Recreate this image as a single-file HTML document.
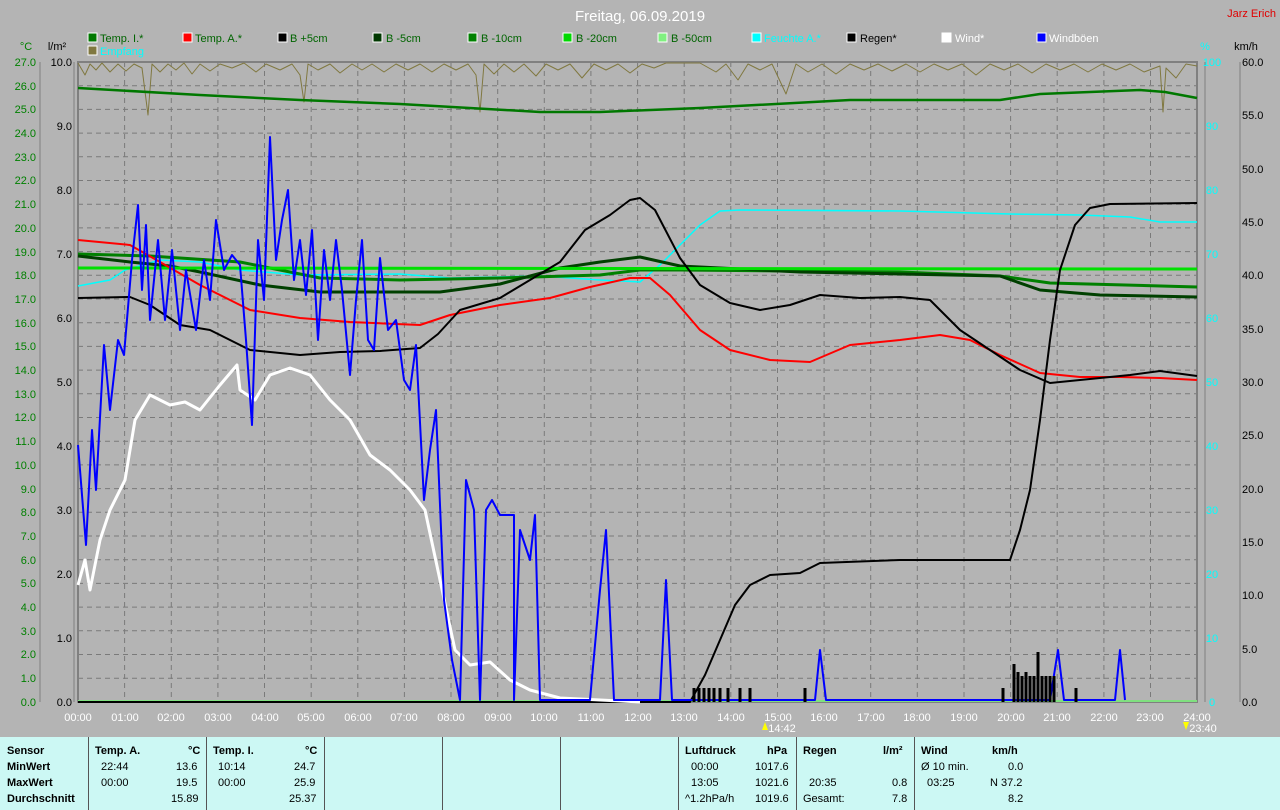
<!DOCTYPE html>
<html><head><meta charset="utf-8"><style>
body{margin:0;width:1280px;height:810px;overflow:hidden;background:#b4b4b4;font-family:"Liberation Sans",sans-serif}
svg{position:absolute;left:0;top:0}
#tbl{position:absolute;left:0;top:737px;width:1280px;height:73px;background:#ccf8f4;font-size:11px;color:#000}
.c{position:absolute;top:0;height:73px;border-left:1px solid #555}
.t{position:absolute;white-space:pre}
b{font-weight:bold}
</style></head><body>
<svg width="1280" height="737" font-family="Liberation Sans" font-size="11">
<text x="640" y="21" fill="#fff" font-size="15" text-anchor="middle">Freitag, 06.09.2019</text>
<text x="1276" y="17" fill="#e00000" font-size="11" text-anchor="end">Jarz Erich</text>
<g font-size="11">
<rect x="88" y="33" width="9" height="9" fill="#007800" stroke="#fff"/><text x="100" y="42" fill="#006400">Temp. I.*</text>
<rect x="183" y="33" width="9" height="9" fill="#f00" stroke="#fff"/><text x="195" y="42" fill="#006400">Temp. A.*</text>
<rect x="278" y="33" width="9" height="9" fill="#000" stroke="#fff"/><text x="290" y="42" fill="#006400">B +5cm</text>
<rect x="373" y="33" width="9" height="9" fill="#003800" stroke="#fff"/><text x="386" y="42" fill="#006400">B -5cm</text>
<rect x="468" y="33" width="9" height="9" fill="#008000" stroke="#fff"/><text x="481" y="42" fill="#006400">B -10cm</text>
<rect x="563" y="33" width="9" height="9" fill="#00d800" stroke="#fff"/><text x="576" y="42" fill="#006400">B -20cm</text>
<rect x="658" y="33" width="9" height="9" fill="#80f080" stroke="#fff"/><text x="671" y="42" fill="#006400">B -50cm</text>
<rect x="752" y="33" width="9" height="9" fill="#0ff" stroke="#fff"/><text x="764" y="42" fill="#0ff">Feuchte A.*</text>
<rect x="847" y="33" width="9" height="9" fill="#000" stroke="#fff"/><text x="860" y="42" fill="#000">Regen*</text>
<rect x="942" y="33" width="9" height="9" fill="#fff" stroke="#fff"/><text x="955" y="42" fill="#fff">Wind*</text>
<rect x="1037" y="33" width="9" height="9" fill="#00f" stroke="#fff"/><text x="1049" y="42" fill="#fff">Windböen</text>
<rect x="88" y="46" width="9" height="9" fill="#807840" stroke="#fff"/><text x="100" y="55" fill="#0ff">Empfang</text>
</g>
<text x="26" y="50" fill="#008000" text-anchor="middle">°C</text>
<text x="57" y="50" fill="#000" text-anchor="middle">l/m²</text>
<text x="1205" y="50" fill="#0ff" text-anchor="middle">%</text>
<text x="1246" y="50" fill="#000" text-anchor="middle">km/h</text>
<g id="grid" stroke="#7a7a7a" stroke-dasharray="5,4" stroke-width="1">
<path d="M78 85.7H1197M78 109.4H1197M78 133.1H1197M78 156.8H1197M78 180.5H1197M78 204.2H1197M78 227.9H1197M78 251.6H1197M78 275.3H1197M78 299H1197M78 322.7H1197M78 346.4H1197M78 370.1H1197M78 393.8H1197M78 417.5H1197M78 441.2H1197M78 464.9H1197M78 488.6H1197M78 512.3H1197M78 536H1197M78 559.7H1197M78 583.4H1197M78 607.1H1197M78 630.8H1197M78 654.5H1197M78 678.2H1197"/>
<path d="M124.6 62V702M171.3 62V702M217.9 62V702M264.5 62V702M311.2 62V702M357.8 62V702M404.4 62V702M451 62V702M497.7 62V702M544.3 62V702M590.9 62V702M637.6 62V702M684.2 62V702M730.8 62V702M777.5 62V702M824.1 62V702M870.7 62V702M917.3 62V702M964 62V702M1010.6 62V702M1057.2 62V702M1103.9 62V702M1150.5 62V702"/>
</g>
<rect x="78" y="62" width="1119" height="640" fill="none" stroke="#808080" stroke-width="2"/>
<g stroke="#808080"><path d="M40 62V702M74 62V702M1205 62V702M1240 62V702"/></g>
<g fill="#008000" font-size="11" text-anchor="end">
<text x="36" y="66">27.0</text><text x="36" y="90">26.0</text><text x="36" y="113">25.0</text><text x="36" y="137">24.0</text><text x="36" y="161">23.0</text><text x="36" y="184">22.0</text><text x="36" y="208">21.0</text><text x="36" y="232">20.0</text><text x="36" y="256">19.0</text><text x="36" y="279">18.0</text><text x="36" y="303">17.0</text><text x="36" y="327">16.0</text><text x="36" y="350">15.0</text><text x="36" y="374">14.0</text><text x="36" y="398">13.0</text><text x="36" y="421">12.0</text><text x="36" y="445">11.0</text><text x="36" y="469">10.0</text><text x="36" y="493">9.0</text><text x="36" y="516">8.0</text><text x="36" y="540">7.0</text><text x="36" y="564">6.0</text><text x="36" y="587">5.0</text><text x="36" y="611">4.0</text><text x="36" y="635">3.0</text><text x="36" y="658">2.0</text><text x="36" y="682">1.0</text><text x="36" y="706">0.0</text>
</g>
<g fill="#000" text-anchor="end">
<text x="72" y="66">10.0</text><text x="72" y="130">9.0</text><text x="72" y="194">8.0</text><text x="72" y="258">7.0</text><text x="72" y="322">6.0</text><text x="72" y="386">5.0</text><text x="72" y="450">4.0</text><text x="72" y="514">3.0</text><text x="72" y="578">2.0</text><text x="72" y="642">1.0</text><text x="72" y="706">0.0</text>
</g>
<g fill="#0ff" text-anchor="middle">
<text x="1212" y="66">100</text><text x="1212" y="130">90</text><text x="1212" y="194">80</text><text x="1212" y="258">70</text><text x="1212" y="322">60</text><text x="1212" y="386">50</text><text x="1212" y="450">40</text><text x="1212" y="514">30</text><text x="1212" y="578">20</text><text x="1212" y="642">10</text><text x="1212" y="706">0</text>
</g>
<g fill="#000">
<text x="1242" y="66">60.0</text><text x="1242" y="119">55.0</text><text x="1242" y="173">50.0</text><text x="1242" y="226">45.0</text><text x="1242" y="279">40.0</text><text x="1242" y="333">35.0</text><text x="1242" y="386">30.0</text><text x="1242" y="439">25.0</text><text x="1242" y="493">20.0</text><text x="1242" y="546">15.0</text><text x="1242" y="599">10.0</text><text x="1242" y="653">5.0</text><text x="1242" y="706">0.0</text>
</g>
<g fill="#fff" text-anchor="middle">
<text x="78" y="721">00:00</text><text x="125" y="721">01:00</text><text x="171" y="721">02:00</text><text x="218" y="721">03:00</text><text x="265" y="721">04:00</text><text x="311" y="721">05:00</text><text x="358" y="721">06:00</text><text x="404" y="721">07:00</text><text x="451" y="721">08:00</text><text x="498" y="721">09:00</text><text x="544" y="721">10:00</text><text x="591" y="721">11:00</text><text x="638" y="721">12:00</text><text x="684" y="721">13:00</text><text x="731" y="721">14:00</text><text x="778" y="721">15:00</text><text x="824" y="721">16:00</text><text x="871" y="721">17:00</text><text x="917" y="721">18:00</text><text x="964" y="721">19:00</text><text x="1011" y="721">20:00</text><text x="1057" y="721">21:00</text><text x="1104" y="721">22:00</text><text x="1150" y="721">23:00</text><text x="1197" y="721">24:00</text>
<text x="782" y="732">14:42</text><text x="1203" y="732">23:40</text>
</g>
<path d="M762 730l3 -8l3 8z" fill="#ff0"/><path d="M1183 722l3 8l3 -8z" fill="#ff0"/>
<path d="M78 701H1197" stroke="#80e080" stroke-width="2"/>
<g fill="none" stroke-linejoin="round">
<polyline stroke="#807840" stroke-width="1" points="78,63 85,75 90,64 96,70 102,63 110,72 118,64 126,71 134,64 142,68 148,115 152,64 160,72 168,64 176,70 184,63 192,74 200,64 210,71 220,64 232,68 244,63 256,72 266,64 280,70 292,64 300,75 304,102 308,64 318,70 330,64 340,73 352,64 362,70 372,64 384,72 396,64 408,70 420,64 432,72 444,64 456,70 468,64 476,75 480,112 484,64 494,74 504,64 514,72 524,64 536,76 546,64 558,70 570,64 582,78 594,64 606,70 618,64 630,73 642,64 654,68 666,63 700,63 716,72 726,64 738,80 748,64 760,70 772,64 786,94 796,64 808,72 822,64 836,74 850,64 864,70 878,64 892,71 906,64 920,72 934,64 948,70 962,64 976,75 990,64 1004,70 1018,64 1032,73 1046,64 1060,70 1074,64 1088,72 1102,64 1116,70 1130,64 1144,72 1160,66 1163,112 1166,68 1176,78 1186,64 1197,66"/>
<polyline stroke="#007800" stroke-width="2.5" points="78,88 200,95 300,100 400,104 540,112 600,112 700,108 850,100 1000,100 1040,94 1140,90 1165,92 1197,98"/>
<polyline stroke="#00ffff" stroke-width="1.5" points="78,286 110,280 125,270 160,260 200,262 240,270 300,275 400,274 450,278 540,276 600,280 640,282 660,265 680,245 700,225 720,211 740,210 900,211 1010,214 1080,215 1130,217 1160,222 1197,222"/>
<polyline stroke="#008000" stroke-width="3" points="78,254 150,256 240,262 320,278 400,280 500,278 600,275 640,270 680,270 900,272 1000,276 1050,283 1197,287"/>
<polyline stroke="#004000" stroke-width="3" points="78,256 130,262 170,266 200,272 260,285 320,292 440,292 500,284 560,268 600,262 640,257 680,266 800,272 1000,276 1040,290 1100,295 1197,297"/>
<polyline stroke="#00e000" stroke-width="3" points="78,268 1197,269"/>
<polyline stroke="#f00" stroke-width="2" points="78,240 130,245 160,262 200,285 250,310 300,318 350,322 420,325 450,315 500,305 550,298 590,287 630,278 650,278 670,295 700,330 730,350 770,360 810,362 850,345 900,340 940,335 970,340 1000,355 1040,373 1080,377 1120,377 1160,378 1197,380"/>
<polyline stroke="#000" stroke-width="2" points="78,298 130,297 150,305 180,325 210,330 250,350 300,355 340,352 380,351 420,348 438,334 460,310 500,298 530,280 560,262 585,230 610,215 630,200 640,198 655,210 680,258 700,285 730,303 760,310 790,305 820,295 860,298 900,297 930,300 960,330 990,350 1020,370 1050,383 1080,380 1130,375 1160,371 1197,376"/>
<polyline stroke="#000" stroke-width="2" points="78,702 690,702 705,675 720,640 735,605 750,585 770,575 800,573 820,563 900,560 1010,560 1020,530 1030,490 1040,420 1050,340 1060,270 1075,225 1090,208 1110,204 1197,203"/>
<polyline stroke="#fff" stroke-width="3" points="78,585 85,560 90,590 100,540 110,510 125,480 135,420 150,395 170,405 185,402 200,410 220,385 237,365 240,390 255,400 270,375 290,368 310,375 330,400 350,420 370,455 390,470 410,490 425,510 440,580 455,650 470,665 490,662 510,680 530,690 560,698 600,700 640,702"/>
<polyline stroke="#0000ff" stroke-width="2" points="78,445 82,495 86,545 92,430 96,490 104,345 110,410 118,340 124,355 132,260 138,205 142,290 146,225 150,320 158,240 165,320 172,250 180,330 186,270 196,330 204,260 210,300 216,220 224,270 232,255 240,265 246,340 252,425 258,240 264,300 270,137 276,260 282,220 288,190 294,280 300,240 306,295 312,230 318,340 324,250 330,300 336,240 342,290 350,375 356,300 362,240 368,340 374,350 380,258 388,330 396,320 404,380 410,390 416,345 424,500 430,450 436,410 444,600 452,660 460,700 466,480 474,510 480,700 486,510 492,500 500,515 514,515 514,700 520,530 530,560 535,515 540,700 550,700 590,700 600,590 606,530 614,700 660,700 666,580 672,700 815,700 820,650 826,700 1050,700 1058,650 1064,700 1115,700 1120,650 1125,700"/>
</g>
<g stroke="#000" stroke-width="3">
<path d="M694 702v-14M699 702v-14M704 702v-14M709 702v-14M714 702v-14M720 702v-14M728 702v-14M740 702v-14M750 702v-14M805 702v-14M1003 702v-14M1014 702v-38M1018 702v-30M1022 702v-26M1026 702v-30M1030 702v-26M1034 702v-26M1038 702v-50M1042 702v-26M1046 702v-26M1050 702v-26M1054 702v-26M1076 702v-14"/>
</g>
</svg>
<div id="tbl">
<div class="c" style="left:88px"></div><div class="c" style="left:206px"></div><div class="c" style="left:324px"></div><div class="c" style="left:442px"></div><div class="c" style="left:560px"></div><div class="c" style="left:678px"></div><div class="c" style="left:796px"></div><div class="c" style="left:914px"></div>
<div class="t" style="left:7px;top:8px"><b>Sensor</b></div><div class="t" style="left:7px;top:24px"><b>MinWert</b></div><div class="t" style="left:7px;top:40px"><b>MaxWert</b></div><div class="t" style="left:7px;top:56px"><b>Durchschnitt</b></div>
<div class="t" style="left:95px;top:8px"><b>Temp. A.</b></div><div class="t" style="left:188px;top:8px"><b>°C</b></div>
<div class="t" style="left:101px;top:24px">22:44</div><div class="t" style="left:176px;top:24px">13.6</div>
<div class="t" style="left:101px;top:40px">00:00</div><div class="t" style="left:176px;top:40px">19.5</div>
<div class="t" style="left:171px;top:56px">15.89</div>
<div class="t" style="left:213px;top:8px"><b>Temp. I.</b></div><div class="t" style="left:305px;top:8px"><b>°C</b></div>
<div class="t" style="left:218px;top:24px">10:14</div><div class="t" style="left:294px;top:24px">24.7</div>
<div class="t" style="left:218px;top:40px">00:00</div><div class="t" style="left:294px;top:40px">25.9</div>
<div class="t" style="left:289px;top:56px">25.37</div>
<div class="t" style="left:685px;top:8px"><b>Luftdruck</b></div><div class="t" style="left:767px;top:8px"><b>hPa</b></div>
<div class="t" style="left:691px;top:24px">00:00</div><div class="t" style="left:755px;top:24px">1017.6</div>
<div class="t" style="left:691px;top:40px">13:05</div><div class="t" style="left:755px;top:40px">1021.6</div>
<div class="t" style="left:685px;top:56px">^1.2hPa/h</div><div class="t" style="left:755px;top:56px">1019.6</div>
<div class="t" style="left:803px;top:8px"><b>Regen</b></div><div class="t" style="left:883px;top:8px"><b>l/m²</b></div>
<div class="t" style="left:809px;top:40px">20:35</div><div class="t" style="left:892px;top:40px">0.8</div>
<div class="t" style="left:803px;top:56px">Gesamt:</div><div class="t" style="left:892px;top:56px">7.8</div>
<div class="t" style="left:921px;top:8px"><b>Wind</b></div><div class="t" style="left:992px;top:8px"><b>km/h</b></div>
<div class="t" style="left:921px;top:24px">Ø 10 min.</div><div class="t" style="left:1008px;top:24px">0.0</div>
<div class="t" style="left:927px;top:40px">03:25</div><div class="t" style="left:990px;top:40px">N 37.2</div>
<div class="t" style="left:1008px;top:56px">8.2</div>
</div>
</body></html>
